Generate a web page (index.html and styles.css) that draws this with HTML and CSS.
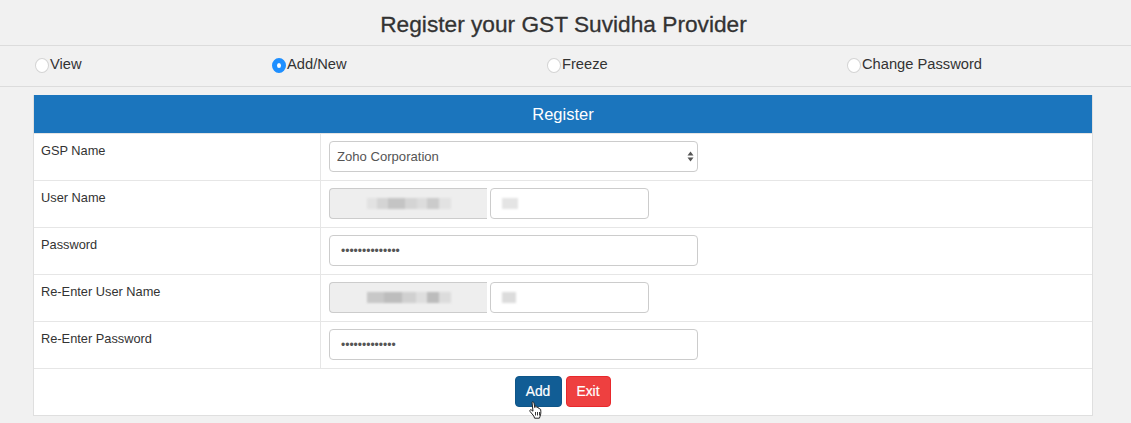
FILE: index.html
```html
<!DOCTYPE html>
<html lang="en">
<head>
<meta charset="utf-8">
<title>Register your GST Suvidha Provider</title>
<link rel="stylesheet" href="styles.css">
</head>
<body>
<h1 class="title">Register your GST Suvidha Provider</h1>
<div class="options">
  <label class="option opt-view"><input type="radio" name="mode">View</label>
  <label class="option opt-add"><input type="radio" name="mode" checked>Add/New</label>
  <label class="option opt-freeze"><input type="radio" name="mode">Freeze</label>
  <label class="option"><input type="radio" name="mode">Change Password</label>
</div>
<section class="panel">
  <h2 class="panel-head">Register</h2>
  <div class="row">
    <div class="label">GSP Name</div>
    <div class="field">
      <div class="select-wrap">
        <select class="control wide select"><option>Zoho Corporation</option></select>
        <svg class="arrows" width="7" height="11" viewBox="0 0 7 11"><path d="M3.5 0.5 6.5 4.5H0.5Z M0.5 6.5H6.5L3.5 10.5Z" fill="#555"/></svg>
      </div>
    </div>
  </div>
  <div class="row">
    <div class="label">User Name</div>
    <div class="field">
      <div class="addon"><span class="smudge smudge-a"></span></div>
      <div class="control short"><span class="smudge smudge-b"></span></div>
    </div>
  </div>
  <div class="row">
    <div class="label">Password</div>
    <div class="field"><input class="control wide pass" type="password" value="12345678901234"></div>
  </div>
  <div class="row">
    <div class="label">Re-Enter User Name</div>
    <div class="field">
      <div class="addon"><span class="smudge smudge-a smudge-dark"></span></div>
      <div class="control short"><span class="smudge smudge-b smudge-b2"></span></div>
    </div>
  </div>
  <div class="row">
    <div class="label">Re-Enter Password</div>
    <div class="field"><input class="control wide pass" type="password" value="1234567890123"></div>
  </div>
  <div class="actions">
    <button class="btn btn-add" type="button">Add</button>
    <button class="btn btn-exit" type="button">Exit</button>
    <svg class="cursor" width="14" height="18" viewBox="0 0 14 18"><path d="M3 1.2c.8-.6 1.8-.2 2 .8l.8 4.6.3-1.2c.7-.5 1.5-.3 1.8.4l.2 1c.5-.6 1.4-.5 1.7.2l.2.9c.6-.4 1.4-.2 1.6.6.5 2.3.3 4.8-.7 7.3l-.5 1.4H5.6L4.8 15 1 10.4c-.6-.8.1-1.9 1.1-1.6l1.9 1.4Z" fill="#fff" stroke="#222" stroke-width="1"/><path d="M6.5 11v3.5M8.5 11v3.5M10.5 11v3.5" stroke="#222" stroke-width=".9" fill="none"/></svg>
  </div>
</section>
</body>
</html>
```
FILE: styles.css
```css
* { box-sizing: border-box; }
html, body { margin: 0; height: 423px; overflow: hidden; }
body { background: #f1f1f1; color: #333; font-family: "Liberation Sans", Arial, sans-serif; font-size: 12.8px; }
.title { margin: 0; height: 46px; padding-right: 4px; border-bottom: 1px solid #dcdcdc; text-align: center; font-size: 22.7px; font-weight: 400; line-height: 49px; -webkit-text-stroke: 0.3px #333; }
.options { display: flex; height: 41px; padding-left: 35px; border-bottom: 1px solid #dcdcdc; font-size: 14.7px; line-height: 36px; }
.option { display: flex; align-items: center; height: 36px; }
.opt-view { width: 237px; }
.opt-add { width: 275px; }
.opt-freeze { width: 300px; }
.option input { appearance: none; width: 14px; height: 15px; margin: 2px 1px 0 0; border: 1px solid #d4d4d4; border-radius: 50%; background: #fff; }
.option input:checked { border: 5px solid #1e8fff; }
.panel { width: 1060px; height: 321px; margin: 8px 0 0 33px; background: #fff; border: 1px solid #dfdfdf; border-top: 0; }
.panel-head { margin: 0; height: 39px; background: #1b75bd; border-bottom: 1px solid #e4e4e4; color: #fff; text-align: center; font-size: 16.5px; font-weight: 400; line-height: 38px; }
.row { display: flex; height: 47px; border-bottom: 1px solid #e6e6e6; }
.label { width: 287px; padding: 9px 7px; border-right: 1px solid #e6e6e6; color: #333; line-height: 16px; }
.field { display: flex; flex: 1; padding: 7px 8px; }
.control { height: 31px; background: #fff; border: 1px solid #ccc; border-radius: 4px; color: #555; font: 13.1px "Liberation Sans", Arial, sans-serif; }
.wide { width: 369px; }
.select-wrap { position: relative; width: 369px; height: 31px; }
.select { appearance: none; padding: 0 7px; }
.arrows { position: absolute; right: 4px; top: 10px; }
.pass { padding: 0 11px; outline: none; font-size: 12px; }
.addon { display: flex; align-items: center; width: 158px; height: 31px; padding-left: 37px; background: #eee; border: 1px solid #ccc; border-right: 0; border-radius: 4px 0 0 4px; }
.short { display: flex; align-items: center; width: 159px; margin-left: 3px; padding-left: 11px; }
.smudge { display: block; height: 11px; filter: blur(1px); }
.smudge-a { width: 84px; background: linear-gradient(90deg, #e2e2e2 0 12%, #d4d4d4 12% 25%, #c4c4c4 25% 45%, #d4d4d4 45% 60%, #dcdcdc 60% 72%, #cbcbcb 72% 86%, #e2e2e2 86%); }
.smudge-dark { background: linear-gradient(90deg, #c8c8c8 0 20%, #bdbdbd 20% 42%, #d0d0d0 42% 58%, #dedede 58% 72%, #bcbcbc 72% 86%, #dcdcdc 86%); }
.smudge-b { width: 16px; background: #e4e4e4; }
.smudge-b2 { width: 14px; background: #dcdcdc; }
.actions { position: relative; display: flex; justify-content: center; gap: 4px; padding: 7px 1px 0 0; }
.btn { width: 47px; height: 31px; padding: 0; border-radius: 4px; color: #fff; font: 13.8px "Liberation Sans", Arial, sans-serif; -webkit-text-stroke: 0.2px #fff; }
.btn-add { background: #115d95; border: 1px solid #0f5688; }
.btn-exit { width: 45px; background: #ee4040; border: 1px solid #e8282c; }
.cursor { position: absolute; left: 495px; top: 32px; }
```
